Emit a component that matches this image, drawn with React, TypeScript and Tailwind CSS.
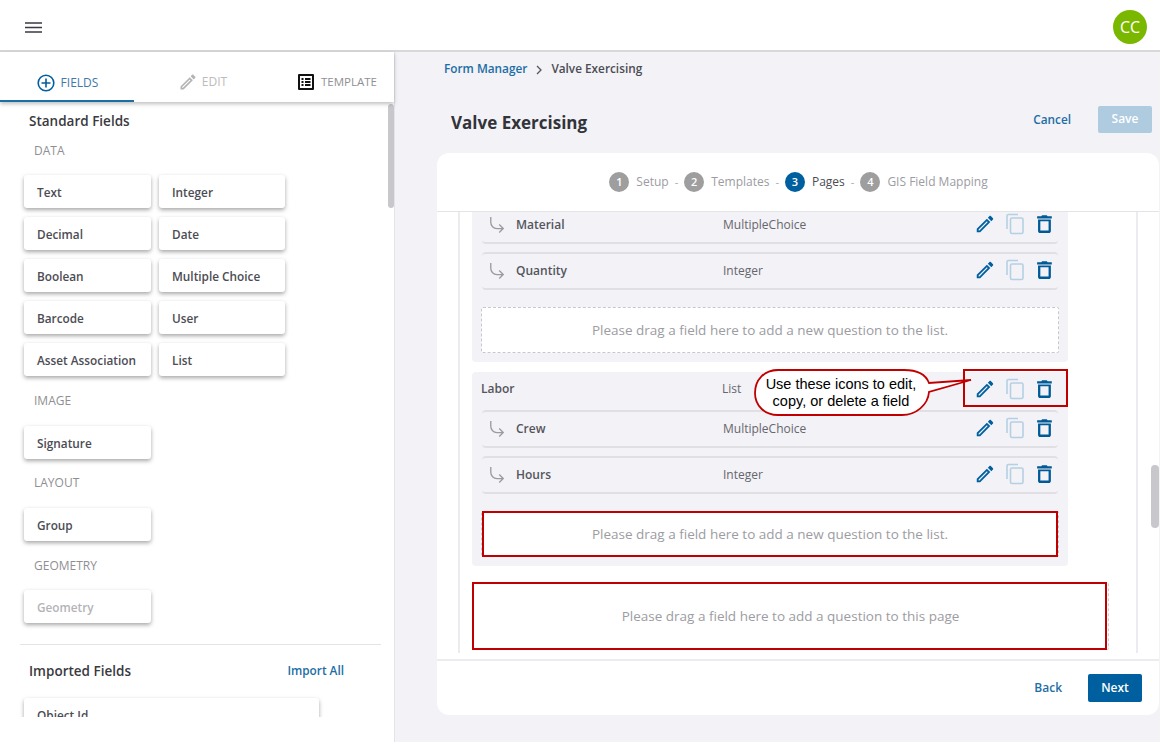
const font = "font-['Open_Sans',sans-serif]"

function PencilIcon({ className }: { className?: string }) {
  return (
    <svg viewBox="0 0 24 24" className={className} fill="currentColor">
      <path d="M14.06 9.02l.92.92L5.92 19H5v-.92l9.06-9.06M17.66 3c-.25 0-.51.1-.7.29l-1.83 1.83 3.75 3.75 1.83-1.83c.39-.39.39-1.02 0-1.41l-2.34-2.34c-.2-.2-.45-.29-.71-.29zm-3.6 3.19L3 17.25V21h3.75L17.81 9.94l-3.75-3.75z" />
    </svg>
  )
}

function RowIcons() {
  return (
    <div className="flex items-center">
      <PencilIcon className="h-[22px] w-[22px] text-[#005f9e]" />
      <svg viewBox="0 0 20 22" className="ml-[9px] h-[22px] w-[20px] text-[#b5d0e3]" fill="none" stroke="currentColor" strokeWidth="1.6">
        <path d="M2 16V3a1.5 1.5 0 0 1 1.5-1.5H13" />
        <rect x="5.5" y="5" width="12.5" height="15.5" rx="1.5" />
      </svg>
      <svg viewBox="0 0 24 24" className="ml-[8px] h-[22px] w-[22px] text-[#005a96]" fill="currentColor">
        <path d="M17 9v10H8V9h9m-2-6.5H10L9 3.5H4.5V6h16V3.5H16l-1-1zM19.5 7h-14v12.5c0 1.3 1 2.3 2.3 2.3h9.4c1.3 0 2.3-1 2.3-2.3V7z" />
      </svg>
    </div>
  )
}

function ChildRow({ name, type }: { name: string; type: string }) {
  return (
    <div className="mx-[10px] flex h-[38px] items-center rounded-[4px] border-b-2 border-t-2 border-[#e0e0e4] pl-[7px] pr-[3px]">
      <svg viewBox="0 0 18 20" className="h-[18px] w-[16px] text-[#9a9aa0]" fill="none" stroke="currentColor" strokeWidth="1.5">
        <path d="M2 1v6c0 4 3 7 7 7h7M11.5 9.5l4.5 4.5-4.500 4.500" />
      </svg>
      <span className="ml-[11px] w-[207px] text-[12px] font-semibold text-[#55555c]">{name}</span>
      <span className="flex-1 text-[12px] text-[#66666c]">{type}</span>
      <div className="-mt-[3px]">
        <RowIcons />
      </div>
    </div>
  )
}

function DropZone({ text, marked }: { text: string; marked?: boolean }) {
  return (
    <div className="relative mx-[9px] mt-[17px] flex h-[46px] items-center justify-center rounded-[2px] border border-dashed border-[#c8c8cc] bg-white text-[13.5px] text-[#9c9ca2]">
      {marked && <div className="absolute inset-y-[-1px] left-0 right-0 border-2 border-[#c00000]" />}
      {text}
    </div>
  )
}

function FieldCard({ label, muted, wide }: { label: string; muted?: boolean; wide?: boolean }) {
  return (
    <div
      className={`flex h-[33px] items-center rounded-[3px] bg-white pl-[13px] pt-[3px] text-[11.8px] font-semibold shadow-[0_2px_4px_rgba(0,0,0,0.35)] ${wide ? "w-[295px]" : "w-full"} ${muted ? "text-[#b4b4b8]" : "text-[#4c4c54]"}`}
    >
      {label}
    </div>
  )
}

function SectionLabel({ children }: { children: string }) {
  return <div className="pl-[34px] text-[12px] leading-[16px] text-[#8f8f93]">{children}</div>
}

function Step({ n, label, active }: { n: number; label: string; active?: boolean }) {
  return (
    <div className="flex items-center">
      <span className={`flex h-[20px] w-[20px] items-center justify-center rounded-full text-[11px] font-semibold text-white ${active ? "bg-[#005f9e]" : "bg-[#9e9e9e]"}`}>
        {n}
      </span>
      <span className={`ml-[7px] text-[12px] ${active ? "text-[#4c4c54]" : "text-[#9c9ca2]"}`}>{label}</span>
    </div>
  )
}

function Sep() {
  return <span className="mx-[6px] text-[11px] text-[#a8a8ac]">-</span>
}

function Sidebar() {
  return (
    <aside className="relative flex w-[395px] shrink-0 flex-col border-r border-[#e4e4e8] bg-white">
      <div className="relative z-10 flex h-[50px] items-center shadow-[0_2px_4px_rgba(0,0,0,0.25)]">
        <div className="flex h-full w-[134px] items-center justify-center border-b-2 border-[#1c6ea4] pl-[1px] pt-[13px]">
          <svg viewBox="0 0 18 18" className="h-[18px] w-[18px] text-[#005f9e]" fill="none" stroke="currentColor" strokeWidth="1.6">
            <circle cx="9" cy="9" r="7.8" />
            <path d="M9 4.5v9M4.5 9h9" />
          </svg>
          <span className="ml-[6px] text-[12px] text-[#3f78aa]">FIELDS</span>
        </div>
        <div className="flex h-full w-[137px] items-center justify-center pt-[9px]">
          <PencilIcon className="h-[20px] w-[20px] text-[#b4b4b4]" />
          <span className="ml-[4px] text-[12px] text-[#bcbcbc]">EDIT</span>
        </div>
        <div className="flex h-full flex-1 items-center pl-[27px] pt-[9px]">
          <svg viewBox="0 0 16 16" className="h-[16px] w-[16px]">
            <rect width="16" height="16" rx="1" fill="#111" />
            <rect x="2" y="2" width="12" height="12" fill="#fff" />
            <path d="M3.5 4h2v2h-2zM7 4h5.5v2H7zM3.5 7h2v2h-2zM7 7h5.5v2H7zM3.5 10h2v2h-2zM7 10h5.5v2H7z" fill="#111" />
          </svg>
          <span className="ml-[7px] text-[11.5px] text-[#8f8f95]">TEMPLATE</span>
        </div>
      </div>

      <div className="h-[615px] overflow-hidden">
        <h2 className="pl-[29px] pt-[9px] text-[13.5px] font-semibold leading-[20px] text-[#3a3a40]">Standard Fields</h2>
        <div className="mt-[12px]">
          <SectionLabel>DATA</SectionLabel>
        </div>
        <div className="ml-[24px] mt-[16px] grid w-[261px] grid-cols-[127px_126px] gap-x-[8px] gap-y-[9px]">
          {["Text", "Integer", "Decimal", "Date", "Boolean", "Multiple Choice", "Barcode", "User", "Asset Association", "List"].map((f) => (
            <FieldCard key={f} label={f} />
          ))}
        </div>
        <div className="mt-[17px]">
          <SectionLabel>IMAGE</SectionLabel>
        </div>
        <div className="ml-[24px] mt-[17px] w-[127px]">
          <FieldCard label="Signature" />
        </div>
        <div className="mt-[16px]">
          <SectionLabel>LAYOUT</SectionLabel>
        </div>
        <div className="ml-[24px] mt-[17px] w-[127px]">
          <FieldCard label="Group" />
        </div>
        <div className="mt-[17px]">
          <SectionLabel>GEOMETRY</SectionLabel>
        </div>
        <div className="ml-[24px] mt-[16px] w-[127px]">
          <FieldCard label="Geometry" muted />
        </div>
        <div className="ml-[20px] mt-[21px] w-[361px] border-t border-[#e4e4e8]" />
        <div className="mt-[16px] flex w-[344px] items-center justify-between pl-[29px]">
          <span className="text-[13.5px] font-semibold leading-[20px] text-[#3a3a40]">Imported Fields</span>
          <span className="text-[11.8px] font-semibold text-[#1c6ea4]">Import All</span>
        </div>
        <div className="ml-[24px] mt-[17px]">
          <FieldCard label="Object Id" wide />
        </div>
      </div>

      <div className="absolute right-0 top-[52px] h-[104px] w-[6px] rounded-[3px] bg-[#c8c8cc]" />
    </aside>
  )
}

function FormBody() {
  return (
    <div className="relative h-[447px] overflow-hidden">
      <div className="mx-[21px] h-full border-x-2 border-[#ececf0] pl-[12px]">
        <div className="-mt-[6px] w-[596px] rounded-b-[4px] bg-[#f2f2f7] pb-[9px]">
          <ChildRow name="Material" type="MultipleChoice" />
          <div className="mt-[8px]">
            <ChildRow name="Quantity" type="Integer" />
          </div>
          <DropZone text="Please drag a field here to add a new question to the list." />
        </div>

        <div className="mt-[10px] w-[596px] rounded-[4px] bg-[#f2f2f7] pb-[9px]">
          <div className="flex h-[38px] items-center pb-[4px] pl-[9px] pr-[13px]">
            <span className="w-[241px] text-[12px] font-semibold text-[#55555c]">Labor</span>
            <span className="flex-1 text-[12px] text-[#66666c]">List</span>
            <RowIcons />
          </div>
          <ChildRow name="Crew" type="MultipleChoice" />
          <div className="mt-[8px]">
            <ChildRow name="Hours" type="Integer" />
          </div>
          <DropZone text="Please drag a field here to add a new question to the list." marked />
        </div>

        <div className="relative mt-[16px] flex h-[68px] w-[637px] items-center justify-center rounded-[2px] border border-dashed border-[#d0d0d4] text-[13.5px] text-[#9c9ca2]">
          <div className="absolute inset-y-[-1px] left-[-1px] right-[1px] border-2 border-[#c00000]" />
          Please drag a field here to add a question to this page
        </div>
      </div>

      {/* callout over the row icons */}
      <div className="absolute left-[526px] top-[157px] h-[38px] w-[105px] border-2 border-[#c00000]" />
      <div className="absolute left-[317px] top-[157px] h-[47px] w-[220px]">
        <svg viewBox="0 0 220 47" className="absolute inset-0 h-full w-full">
          <path
            d="M24 1H150C165 1 172 6 175 14L217 11L175 23C174 36 162 46 148 46H24C10 46 1 36 1 24C1 11 10 1 24 1Z"
            fill="#fff"
            stroke="#c00000"
            strokeWidth="1.8"
          />
        </svg>
        <div className="absolute left-0 top-[7px] w-[174px] text-center font-['Liberation_Sans',sans-serif] text-[14.5px] leading-[17px] text-black">
          Use these icons to edit,
          <br />
          copy, or delete a field
        </div>
      </div>

      <div className="absolute right-0 top-[253px] h-[63px] w-[8px] rounded-[4px] bg-[#c8c8cc]" />
    </div>
  )
}

export default function App() {
  return (
    <div className={`flex h-screen flex-col overflow-hidden bg-white ${font}`}>
      <header className="flex h-[52px] shrink-0 items-center justify-between border-b-2 border-[#d8d8da] bg-white pl-[25px] pr-[13px] pt-[4px]">
        <svg viewBox="0 0 16 11" className="h-[11px] w-[17px] text-[#3a3a44]" fill="none" stroke="currentColor" strokeWidth="1.6" preserveAspectRatio="none">
          <path d="M0 1h16M0 5.5h16M0 10h16" />
        </svg>
        <div className="flex h-[34px] w-[34px] items-center justify-center rounded-full bg-[#7ab800] text-[16px] text-white">CC</div>
      </header>

      <div className="flex flex-1">
        <Sidebar />

        <main className="flex flex-1 flex-col bg-[#f2f2f7] pl-[42px] pr-px">
          <div className="flex h-[32px] items-center pl-[7px] pt-[2px] text-[11.8px]">
            <span className="font-semibold text-[#1c6ea4]">Form Manager</span>
            <svg viewBox="0 0 8 10" className="mx-[8px] mt-[2px] h-[10px] w-[8px] text-[#55555c]" fill="none" stroke="currentColor" strokeWidth="1.3">
              <path d="M2 1l4 4-4 4" />
            </svg>
            <span className="font-semibold text-[#4c4c54]">Valve Exercising</span>
          </div>

          <div className="mt-[17px] flex h-[36px] items-center justify-between pl-[14px] pr-[7px]">
            <h1 className="pt-[8px] text-[17px] font-bold text-[#33333a]">Valve Exercising</h1>
            <div className="flex items-center">
              <span className="pt-[2px] text-[11.8px] font-semibold text-[#1c6ea4]">Cancel</span>
              <span className="ml-[27px] flex h-[27px] w-[54px] items-center justify-center rounded-[2px] bg-[#aecbe0] text-[12px] font-semibold text-white">Save</span>
            </div>
          </div>

          <section className="mt-[16px] flex h-[562px] flex-col overflow-hidden rounded-[12px] bg-white">
            <div className="flex h-[59px] shrink-0 items-center justify-center border-b border-[#e4e4e8] pl-[1px]">
              <Step n={1} label="Setup" />
              <Sep />
              <Step n={2} label="Templates" />
              <Sep />
              <Step n={3} label="Pages" active />
              <Sep />
              <Step n={4} label="GIS Field Mapping" />
            </div>
            <FormBody />
            <div className="flex flex-1 items-center justify-end border-t-2 border-[#ececf0] pr-[17px]">
              <span className="text-[12px] font-semibold text-[#1c6ea4]">Back</span>
              <span className="ml-[26px] flex h-[28px] w-[54px] items-center justify-center rounded-[2px] bg-[#005f9e] text-[12px] font-semibold text-white">Next</span>
            </div>
          </section>
        </main>
      </div>
    </div>
  )
}
